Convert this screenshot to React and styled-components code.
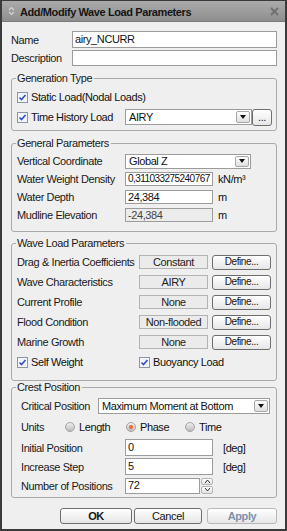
import React from 'react';
import styled, { createGlobalStyle } from 'styled-components';

const Global = createGlobalStyle`
  * { box-sizing: border-box; }
  body {
    margin: 0;
    background: #ffffff;
    font-family: "Liberation Sans", Arial, sans-serif;
    font-size: 11px;
    letter-spacing: -0.4px;
    color: #111;
  }
`;

/** 창 전체 */
const Window = styled.div`
  width: 287px;
  height: 531px;
  display: flex;
  flex-direction: column;
  background: #efefef;
  border: 2px solid #3b3b3b;
  border-top-width: 1px;
`;

const TitleBar = styled.div`
  height: 21px;
  flex: none;
  display: flex;
  align-items: center;
  padding: 0 6px 0 6px;
  gap: 5px;
  background: linear-gradient(#ababab, #8e8e8e);
  border-bottom: 1px solid #7a7a7a;
`;

const TitleText = styled.div`
  flex: 1;
  font-weight: bold;
  color: #151515;
  padding-top: 1px;
`;

const Body = styled.div`
  flex: 1;
  display: flex;
  flex-direction: column;
  padding: 9px 8px 0 9px;
`;

const TopRows = styled.div`
  display: grid;
  grid-template-columns: 61px 1fr;
  grid-auto-rows: 17px;
  row-gap: 1px;
  align-items: center;
`;

const Group = styled.fieldset`
  margin: ${(p) => p.$mt || 0}px 0 0 0;
  padding: 2px 6px ${(p) => p.$pb || 3}px ${(p) => 5 + (p.$indent || 0)}px;
  border: 1px solid #a9a9a9;
  border-radius: 3px;
  min-width: 0;
`;

const Legend = styled.legend`
  padding: 0 2px 0 1px;
  margin-left: ${(p) => -1 - (p.$indent || 0)}px;
  line-height: 13px;
  color: #1a1a1a;
`;

const Rows = styled.div`
  display: grid;
  grid-template-columns: ${(p) => p.$cols};
  grid-auto-rows: ${(p) => p.$row}px;
  column-gap: ${(p) => p.$gap || 0}px;
  align-items: center;
`;

const Label = styled.span`
  white-space: nowrap;
  color: #1a1a1a;
`;

const Unit = styled.span`
  padding-left: ${(p) => p.$pl || 5}px;
  white-space: nowrap;
`;

const Input = styled.div`
  height: ${(p) => p.$h || 14}px;
  width: 100%;
  border: 1px solid #9c9c9c;
  background: ${(p) => (p.$disabled ? '#ececec' : '#ffffff')};
  color: ${(p) => (p.$disabled ? '#444' : '#111')};
  font-size: ${(p) => p.$fs || 11}px;
  letter-spacing: ${(p) => (p.$fs ? '-0.55px' : 'inherit')};
  display: flex;
  align-items: center;
  padding-left: 2px;
  line-height: 1;
  white-space: nowrap;
  overflow: hidden;
`;

const ReadOnly = styled.div`
  height: 14px;
  border: 1px solid #b3b3b3;
  background: #ebebeb;
  display: flex;
  align-items: center;
  justify-content: center;
  color: #222;
`;

const Combo = styled.div`
  height: ${(p) => p.$h || 16}px;
  border: 1px solid #9c9c9c;
  background: #fff;
  display: flex;
  align-items: center;
  padding: 0 1px 0 3px;
`;

const ComboText = styled.span`
  flex: 1;
  white-space: nowrap;
  overflow: hidden;
`;

const DropBtn = styled.span`
  width: 14px;
  height: calc(100% - 2px);
  border: 1px solid #a8a8a8;
  border-radius: 2px;
  background: linear-gradient(#ffffff, #dedede);
  display: flex;
  align-items: center;
  justify-content: center;
`;

const Button = styled.button`
  height: ${(p) => p.$h || 16}px;
  width: ${(p) => p.$w}px;
  padding: 0;
  font-family: inherit;
  font-size: ${(p) => p.$fs || 11}px;
  letter-spacing: inherit;
  font-weight: ${(p) => (p.$bold ? 'bold' : 'normal')};
  color: ${(p) => (p.$disabled ? '#7f8fae' : '#151515')};
  border: 1px solid ${(p) => (p.$disabled ? '#b8b8b8' : '#6e6e6e')};
  border-radius: 3px;
  background: linear-gradient(#ffffff, #e6e6e6);
  line-height: 1;
`;

const CheckWrap = styled.label`
  display: flex;
  align-items: center;
  gap: 3px;
  white-space: nowrap;
`;

const UnitsRow = styled.div`
  display: flex;
  align-items: center;
  height: 22px;
`;

const RadioItem = styled.span`
  display: flex;
  align-items: center;
  gap: 4px;
  width: ${(p) => p.$w}px;
`;

const Spin = styled.div`
  display: flex;
  width: 88px;
  height: 16px;
`;

const SpinArrows = styled.div`
  width: 12px;
  flex: none;
  display: flex;
  flex-direction: column;
  gap: 1px;
  margin-left: 1px;
`;

const SpinBtn = styled.span`
  flex: 1;
  border: 1px solid #b5b5b5;
  border-radius: 2px;
  background: linear-gradient(#ffffff, #e2e2e2);
  display: flex;
  align-items: center;
  justify-content: center;
`;

const Footer = styled.div`
  display: flex;
  justify-content: flex-end;
  margin-top: 10px;
  gap: 2px;
`;

function CheckBox({ label }) {
  return (
    <CheckWrap>
      <svg width="11" height="11" viewBox="0 0 11 11">
        <rect x="0.5" y="0.5" width="10" height="10" fill="#f3f5f9" stroke="#8a97ab" />
        <path d="M2.5 5.5 L4.5 7.5 L8.5 3" fill="none" stroke="#2e4fc9" strokeWidth="1.6" />
      </svg>
      {label}
    </CheckWrap>
  );
}

function Radio({ label, on, w }) {
  return (
    <RadioItem $w={w}>
      <svg width="10" height="10" viewBox="0 0 10 10">
        <defs>
          <linearGradient id={`rg${label}`} x1="0" y1="0" x2="0" y2="1">
            <stop offset="0" stopColor="#f2f2f2" />
            <stop offset="1" stopColor="#b9b9b9" />
          </linearGradient>
        </defs>
        <circle cx="5" cy="5" r="4.5" fill={`url(#rg${label})`} stroke="#a3a3a3" />
        {on && <circle cx="5" cy="5" r="2" fill="#f0662a" />}
      </svg>
      {label}
    </RadioItem>
  );
}

function Arrow() {
  return (
    <svg width="6" height="4" viewBox="0 0 6 4">
      <path d="M0 0 H6 L3 4 Z" fill="#111" />
    </svg>
  );
}

function ComboBox({ value, h }) {
  return (
    <Combo $h={h}>
      <ComboText>{value}</ComboText>
      <DropBtn>
        <Arrow />
      </DropBtn>
    </Combo>
  );
}

function DefineRow({ label, value }) {
  return (
    <>
      <Label>{label}</Label>
      <ReadOnly>{value}</ReadOnly>
      <Button $w={59} $h={15} $fs={10}>Define...</Button>
    </>
  );
}

export default function App() {
  return (
    <>
      <Global />
      <Window>
        <TitleBar>
          <svg width="7" height="10" viewBox="0 0 7 10">
            <path d="M1 4 L3.5 1.5 L6 4 M1 6 L3.5 8.5 L6 6" fill="none" stroke="#d4d4d4" strokeWidth="1.2" />
          </svg>
          <TitleText>Add/Modify Wave Load Parameters</TitleText>
          <svg width="9" height="9" viewBox="0 0 9 9">
            <path d="M1 1 L8 8 M8 1 L1 8" stroke="#6f6f6f" strokeWidth="1.8" />
          </svg>
        </TitleBar>

        <Body>
          <TopRows>
            <Label>Name</Label>
            <Input $h={17}>airy_NCURR</Input>
            <Label>Description</Label>
            <Input $h={16} />
          </TopRows>

          <Group $mt={6} $pb={3}>
            <Legend>Generation Type</Legend>
            <Rows $cols="108px 127px 21px" $row={20}>
              <span style={{ gridColumn: '1 / 4' }}>
                <CheckBox label="Static Load(Nodal Loads)" />
              </span>
              <CheckBox label="Time History Load" />
              <ComboBox value="AIRY" h={16} />
              <Button $w={20} $h={17}>...</Button>
            </Rows>
          </Group>

          <Group $mt={6} $pb={7}>
            <Legend>General Parameters</Legend>
            <Rows $cols="108px 126px" $row={18}>
              <Label>Vertical Coordinate</Label>
              <ComboBox value="Global Z" h={15} />
            </Rows>
            <Rows $cols="108px 88px 1fr" $row={18}>
              <Label>Water Weight Density</Label>
              <Input $fs={10}>0,311033275240767</Input>
              <Unit>kN/m³</Unit>
              <Label>Water Depth</Label>
              <Input>24,384</Input>
              <Unit>m</Unit>
              <Label>Mudline Elevation</Label>
              <Input $disabled>-24,384</Input>
              <Unit>m</Unit>
            </Rows>
          </Group>

          <Group $mt={5} $pb={8}>
            <Legend>Wave Load Parameters</Legend>
            <Rows $cols="118px 69px 59px" $row={20} $gap={4}>
              <DefineRow label="Drag & Inertia Coefficients" value="Constant" />
              <DefineRow label="Wave Characteristics" value="AIRY" />
              <DefineRow label="Current Profile" value="None" />
              <DefineRow label="Flood Condition" value="Non-flooded" />
              <DefineRow label="Marine Growth" value="None" />
            </Rows>
            <Rows $cols="122px 1fr" $row={20}>
              <CheckBox label="Self Weight" />
              <CheckBox label="Buoyancy Load" />
            </Rows>
          </Group>

          <Group $mt={0} $pb={2} $indent={4}>
            <Legend $indent={4}>Crest Position</Legend>
            <Rows $cols="77px 172px" $row={20}>
              <Label>Critical Position</Label>
              <ComboBox value="Maximum Moment at Bottom" h={16} />
            </Rows>
            <UnitsRow>
              <Label style={{ width: 44 }}>Units</Label>
              <Radio label="Length" w={61} />
              <Radio label="Phase" on w={59} />
              <Radio label="Time" w={60} />
            </UnitsRow>
            <Rows $cols="104px 88px 1fr" $row={19}>
              <Label>Initial Position</Label>
              <Input $h={17}>0</Input>
              <Unit $pl={10}>[deg]</Unit>
              <Label>Increase Step</Label>
              <Input $h={17}>5</Input>
              <Unit $pl={10}>[deg]</Unit>
              <Label>Number of Positions</Label>
              <Spin>
                <Input $h={16}>72</Input>
                <SpinArrows>
                  <SpinBtn>
                    <svg width="5" height="3" viewBox="0 0 5 3"><path d="M0 3 L2.5 0 L5 3" fill="none" stroke="#333" /></svg>
                  </SpinBtn>
                  <SpinBtn>
                    <svg width="5" height="3" viewBox="0 0 5 3"><path d="M0 0 L2.5 3 L5 0" fill="none" stroke="#333" /></svg>
                  </SpinBtn>
                </SpinArrows>
              </Spin>
              <span />
            </Rows>
          </Group>

          <Footer>
            <Button $w={72} $bold>OK</Button>
            <Button $w={68}>Cancel</Button>
            <Button $w={70} $bold $disabled style={{ marginLeft: 3 }}>Apply</Button>
          </Footer>
        </Body>
      </Window>
    </>
  );
}
